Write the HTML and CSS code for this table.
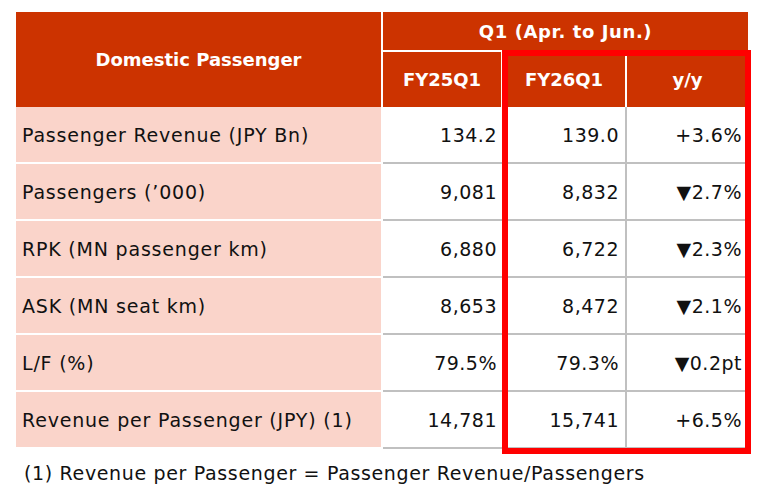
FILE: index.html
```html
<!DOCTYPE html>
<html lang="en">
<head>
<meta charset="utf-8">
<title>Domestic Passenger</title>
<link rel="stylesheet" href="styles.css">
</head>
<body>
<div class="wrap">
  <table class="kpi">
    <colgroup>
      <col class="c-label">
      <col class="c-fy25">
      <col class="c-fy26">
      <col class="c-yy">
    </colgroup>
    <thead>
      <tr class="h1">
        <th class="title" rowspan="2">Domestic Passenger</th>
        <th class="period" colspan="3">Q1 (Apr. to Jun.)</th>
      </tr>
      <tr class="h2">
        <th class="sep">FY25Q1</th>
        <th class="sep">FY26Q1</th>
        <th>y/y</th>
      </tr>
    </thead>
    <tbody>
      <tr><td class="label">Passenger Revenue (JPY Bn)</td><td class="num">134.2</td><td class="num sep">139.0</td><td class="num">+3.6%</td></tr>
      <tr><td class="label">Passengers (’000)</td><td class="num">9,081</td><td class="num sep">8,832</td><td class="num">▼2.7%</td></tr>
      <tr><td class="label">RPK (MN passenger km)</td><td class="num">6,880</td><td class="num sep">6,722</td><td class="num">▼2.3%</td></tr>
      <tr><td class="label">ASK (MN seat km)</td><td class="num">8,653</td><td class="num sep">8,472</td><td class="num">▼2.1%</td></tr>
      <tr><td class="label">L/F (%)</td><td class="num">79.5%</td><td class="num sep">79.3%</td><td class="num">▼0.2pt</td></tr>
      <tr><td class="label">Revenue per Passenger (JPY) (1)</td><td class="num">14,781</td><td class="num sep">15,741</td><td class="num">+6.5%</td></tr>
    </tbody>
  </table>
  <div class="highlight"></div>
  <p class="note">(1) Revenue per Passenger = Passenger Revenue/Passengers</p>
</div>
</body>
</html>
```
FILE: styles.css
```css
* { box-sizing: border-box; }
html, body { margin: 0; padding: 0; background: #ffffff; }
body {
  font-family: "DejaVu Sans", Verdana, sans-serif;
  color: #111111;
}
.wrap {
  position: relative;
  width: 732px;
  margin: 12px 0 0 16px;
}
.kpi {
  width: 732px;
  table-layout: fixed;
  border-collapse: separate;
  border-spacing: 0;
}
.c-label { width: 367px; }
.c-fy25 { width: 120px; }
.c-fy26 { width: 124px; }
.c-yy { width: 121px; }

.kpi th {
  background: #cc3300;
  color: #ffffff;
  font-weight: bold;
  font-size: 18px;
  text-align: center;
  vertical-align: middle;
  padding: 0;
}
.kpi .h1 th { height: 40px; }
.kpi .h2 th { height: 55px; }
.kpi th.title { border-right: 2px solid #ffffff; }
.kpi th.period { border-bottom: 2px solid #ffffff; letter-spacing: 0.6px; }
.kpi th.sep { border-right: 2px solid #ffffff; }

.kpi td {
  height: 57px;
  font-size: 19px;
  vertical-align: middle;
  white-space: nowrap;
  border-bottom: 2px solid #c0c0c0;
}
.kpi td.label {
  background: #fad4ca;
  border-right: 2px solid #ffffff;
  border-bottom: 2px solid #ffffff;
  padding: 0 0 0 6px;
  letter-spacing: 0.8px;
}
.kpi td.num {
  text-align: right;
  padding: 0 6px 0 0;
  letter-spacing: 0.5px;
}
.kpi td.sep { border-right: 2px solid #c0c0c0; }

.highlight {
  position: absolute;
  left: 486px;
  top: 38px;
  width: 249px;
  height: 404px;
  border: 6px solid #ff0000;
}
.note {
  margin: 12px 0 0 0;
  padding-left: 8px;
  font-size: 19px;
  line-height: 24px;
  letter-spacing: 0.65px;
}
```
